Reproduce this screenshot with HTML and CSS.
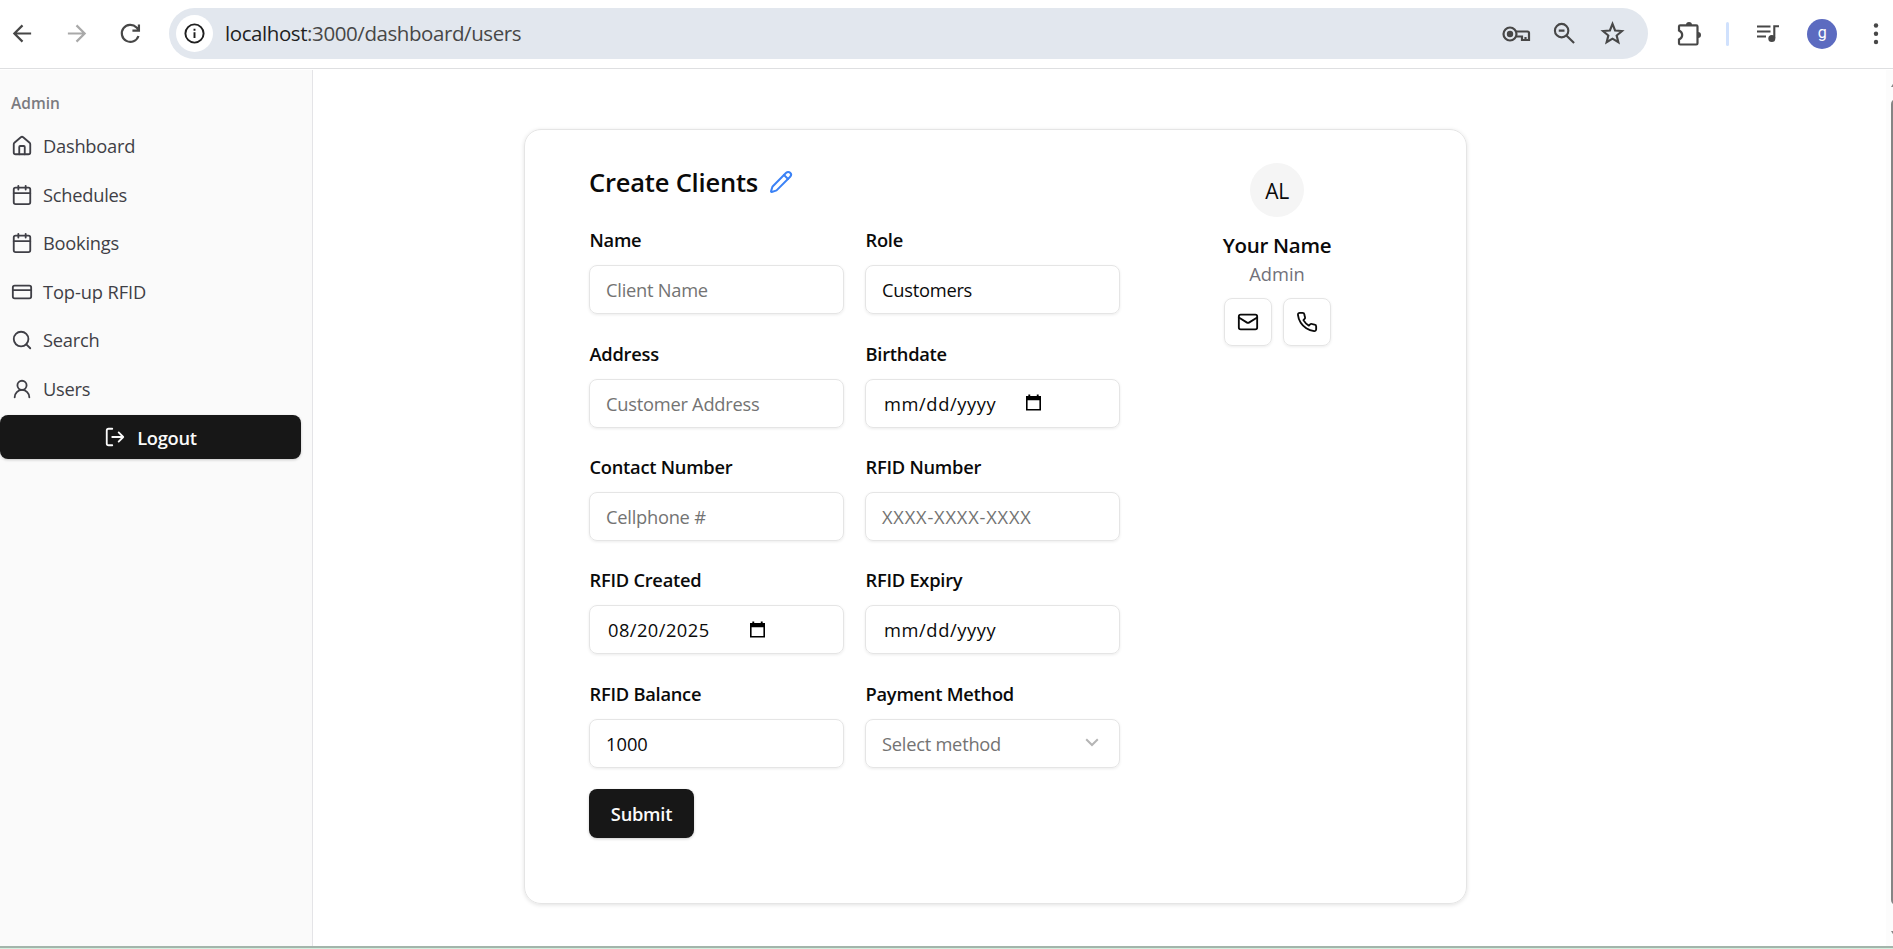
FILE: index.html
```html
<!DOCTYPE html>
<html lang="en">
<head>
<meta charset="utf-8">
<title>Create Clients</title>
<link rel="stylesheet" href="styles.css">
</head>
<body>
<header class="toolbar">
  <svg class="nav-icon back" viewBox="0 0 24 24"><path d="M21 12H4M12 3.500L3.500 12l8.500 8.500"/></svg>
  <svg class="nav-icon forward" viewBox="0 0 24 24"><path d="M3 12h17M12 3.500l8.500 8.500-8.500 8.500"/></svg>
  <svg class="nav-icon reload" viewBox="0 0 24 24"><path d="M20.300 14.600A8.900 8.900 0 1 1 18.300 5.700L20.500 8M20.800 2.500V9H14"/></svg>
  <div class="omnibox">
    <span class="info"><svg viewBox="0 0 24 24"><circle cx="12" cy="12" r="10.400"/><path d="M12 10.700v6.500M12 6.600v2.300"/></svg></span>
    <span class="url"><b>localhost</b>:3000/dashboard/users</span>
    <svg class="key" viewBox="0 0 30 20"><circle cx="9" cy="10" r="6.500"/><circle class="solid" cx="9" cy="10" r="3.200"/><path d="M15 7.500H26.500q1.500 0 1.500 1.500V16H21v-3.500H15.500M24.500 16v-3"/></svg>
    <svg class="magnify" viewBox="0 0 24 24"><circle cx="9" cy="9" r="7"/><path d="M14 14l8 8M6 9h6"/></svg>
    <svg class="star" viewBox="0 0 24 24"><path d="M12 3.500l2.300 5.800 6.100.5-4.700 4 1.500 6L12 16.600l-5.200 3.200 1.500-6-4.700-4 6.100-.5z"/></svg>
  </div>
  <svg class="puzzle" viewBox="0 0 26 26"><path d="M3 5.500Q3 4.300 4.200 4.300H20.300Q21.500 4.300 21.500 5.500V22.300Q21.500 23.500 20.300 23.500H4.200Q3 23.500 3 22.300V18.500Q6.200 17 6.200 14T3 9.500Z"/><path class="solid" d="M10 4a3 3 0 0 1 6 0zM22 11a3 3 0 0 1 0 6z"/></svg>
  <span class="divider"></span>
  <svg class="media" viewBox="0 0 24 20"><path d="M1 2.500h13.500M1 7.500h13.500M1 12.500h9M18.300 14V2.300H23"/><circle class="solid" cx="15.800" cy="14.500" r="3.500"/></svg>
  <span class="profile">g</span>
  <svg class="more" viewBox="0 0 6 24"><circle cx="3" cy="3.500" r="2.200"/><circle cx="3" cy="11.700" r="2.200"/><circle cx="3" cy="20" r="2.200"/></svg>
</header>
<div class="page">
  <aside class="sidebar">
    <div class="group">Admin</div>
    <nav class="menu">
      <a class="item"><svg class="lucide" viewBox="0 0 24 24"><path d="M15 21v-8a1 1 0 0 0-1-1h-4a1 1 0 0 0-1 1v8"/><path d="M3 10a2 2 0 0 1 .709-1.528l7-5.999a2 2 0 0 1 2.582 0l7 5.999A2 2 0 0 1 21 10v9a2 2 0 0 1-2 2H5a2 2 0 0 1-2-2z"/></svg><span>Dashboard</span></a>
      <a class="item"><svg class="lucide" viewBox="0 0 24 24"><path d="M8 2v4M16 2v4M3 10h18"/><rect width="18" height="18" x="3" y="4" rx="2"/></svg><span>Schedules</span></a>
      <a class="item"><svg class="lucide" viewBox="0 0 24 24"><path d="M8 2v4M16 2v4M3 10h18"/><rect width="18" height="18" x="3" y="4" rx="2"/></svg><span>Bookings</span></a>
      <a class="item"><svg class="lucide" viewBox="0 0 24 24"><rect width="20" height="14" x="2" y="5" rx="2"/><path d="M2 10h20"/></svg><span class="topup">Top-up RFID</span></a>
      <a class="item"><svg class="lucide" viewBox="0 0 24 24"><circle cx="11" cy="11" r="8"/><path d="m21 21-4.300-4.300"/></svg><span>Search</span></a>
      <a class="item"><svg class="lucide" viewBox="0 0 24 24"><circle cx="12" cy="8" r="5"/><path d="M20 21a8 8 0 0 0-16 0"/></svg><span>Users</span></a>
    </nav>
    <button class="logout"><svg class="lucide" viewBox="0 0 24 24"><path d="m16 17 5-5-5-5M21 12H9M9 21H5a2 2 0 0 1-2-2V5a2 2 0 0 1 2-2h4"/></svg><span>Logout</span></button>
  </aside>
  <main class="content">
    <section class="card">
      <div class="form">
        <h1 class="title"><span>Create Clients</span><svg class="lucide" viewBox="0 0 24 24"><path d="M21.174 6.812a1 1 0 0 0-3.986-3.987L3.842 16.174a2 2 0 0 0-.5.830l-1.321 4.352a.5.5 0 0 0 .623.622l4.353-1.320a2 2 0 0 0 .830-.497z"/><path d="m15 5 4 4"/></svg></h1>
        <div class="fields">
          <div class="field"><label>Name</label><div class="input hint">Client Name</div></div>
          <div class="field"><label>Role</label><div class="input">Customers</div></div>
          <div class="field"><label>Address</label><div class="input hint">Customer Address</div></div>
          <div class="field"><label>Birthdate</label><div class="input date"><span class="mask">mm/dd/yyyy</span><svg viewBox="0 0 16 17"><path d="M2.500 0h2v1.500h7V0h2v1.500H16V17H0V1.500h2.500zM1.700 6v9.300h12.600V6z"/></svg></div></div>
          <div class="field"><label>Contact Number</label><div class="input hint">Cellphone #</div></div>
          <div class="field"><label>RFID Number</label><div class="input hint rfid">XXXX-XXXX-XXXX</div></div>
          <div class="field"><label>RFID Created</label><div class="input date"><span class="digits">08/20/2025</span><svg viewBox="0 0 16 17"><path d="M2.500 0h2v1.500h7V0h2v1.500H16V17H0V1.500h2.500zM1.700 6v9.300h12.600V6z"/></svg></div></div>
          <div class="field"><label>RFID Expiry</label><div class="input date"><span class="mask">mm/dd/yyyy</span></div></div>
          <div class="field"><label>RFID Balance</label><div class="input amount">1000</div></div>
          <div class="field"><label>Payment Method</label><div class="input hint select"><span>Select method</span><svg viewBox="0 0 14 9"><path d="M1.200 1.200 7 7l5.800-5.800"/></svg></div></div>
        </div>
        <button class="submit">Submit</button>
      </div>
      <div class="person">
        <div class="avatar">AL</div>
        <div class="name">Your Name</div>
        <div class="role">Admin</div>
        <div class="actions">
          <span class="action"><svg class="lucide" viewBox="0 0 24 24"><rect width="20" height="16" x="2" y="4" rx="2"/><path d="m22 7-8.970 5.700a1.940 1.940 0 0 1-2.060 0L2 7"/></svg></span>
          <span class="action"><svg class="lucide" viewBox="0 0 24 24"><path d="M22 16.920v3a2 2 0 0 1-2.180 2 19.790 19.790 0 0 1-8.630-3.070 19.500 19.500 0 0 1-6-6 19.790 19.790 0 0 1-3.070-8.670A2 2 0 0 1 4.110 2h3a2 2 0 0 1 2 1.720 12.840 12.840 0 0 0 .7 2.810 2 2 0 0 1-.45 2.110L8.090 9.910a16 16 0 0 0 6 6l1.270-1.270a2 2 0 0 1 2.110-.45 12.840 12.840 0 0 0 2.810.7A2 2 0 0 1 22 16.920z"/></svg></span>
        </div>
      </div>
    </section>
  </main>
  <div class="scrollbar"><span class="arrow up"></span><span class="thumb"></span><span class="arrow down"></span></div>
</div>
<footer class="edge"></footer>
</body>
</html>
```
FILE: styles.css
```css
* { box-sizing: border-box; }
body {
  margin: 0;
  width: 1893px;
  height: 949px;
  overflow: hidden;
  display: flex;
  flex-direction: column;
  background: #fff;
  color: #0a0a0a;
  font: 400 18.3px/20px "Open Sans", "Noto Sans", sans-serif;
  letter-spacing: -0.25px;
}
svg { display: block; flex: none; fill: none; stroke: currentColor; overflow: visible; }
button { font: inherit; letter-spacing: inherit; border: 0; margin: 0; padding: 0; }
.lucide { stroke-width: 2; stroke-linecap: round; stroke-linejoin: round; }

.toolbar {
  height: 70px;
  flex: none;
  padding: 8px 0 11px 11px;
  display: flex;
  align-items: center;
  color: #474747;
  background: linear-gradient(#fff, #fff) 0 0 / 100% 68px no-repeat, linear-gradient(#dedfe1, #dedfe1) 0 68px / 100% 1px no-repeat;
}
.nav-icon { width: 23px; height: 23px; stroke-width: 2.300; }
.forward { margin-left: 31px; color: #a9a9a9; }
.reload { margin-left: 31px; }
.omnibox {
  width: 1479px;
  height: 51px;
  margin-left: 27px;
  padding: 0 22px 0 7px;
  border-radius: 26px;
  background: #e2e7ee;
  display: flex;
  align-items: center;
}
.info { width: 37px; height: 37px; border-radius: 50%; background: #fff; color: #1f1f1f; display: grid; place-items: center; }
.info svg { width: 21px; height: 21px; stroke-width: 2.200; }
.url { margin: 0 auto 0 12px; padding-bottom: 2px; font-size: 20.500px; letter-spacing: -0.42px; line-height: 30px; }
.url b { font-weight: 400; color: #1f1f1f; }
.solid { fill: currentColor; stroke: none; }
.key { width: 30px; height: 20px; stroke-width: 2.200; }
.magnify { width: 23px; height: 23px; margin-left: 22px; stroke-width: 2.200; }
.star { width: 27px; height: 27px; margin-left: 23px; stroke-width: 1.900; }
.puzzle { width: 26px; height: 26px; margin-left: 28px; stroke-width: 2.200; }
.divider { width: 3px; height: 24px; margin-left: 24px; border-radius: 2px; background: #d0e1fd; }
.media { width: 24px; height: 20px; margin-left: 27px; stroke-width: 2.100; }
.profile { width: 30px; height: 30px; margin-left: 27px; border-radius: 50%; background: #5c6bc0; color: #fff; font: 16px/28px Roboto, sans-serif; text-align: center; }
.more { width: 6px; height: 24px; margin-left: 36px; fill: currentColor; stroke: none; }

.page { flex: 1; min-height: 0; display: flex; }
.sidebar { width: 313px; border-right: 1px solid #e4e4e7; background: #fafafa; padding-top: 23px; }
.group { padding-left: 11px; font-size: 15.500px; font-weight: 600; letter-spacing: 0; color: #7b7b80; }
.menu { padding-top: 9px; }
.item { height: 48.500px; padding-left: 10.500px; display: flex; align-items: center; gap: 10.500px; color: #3f3f46; }
.item svg { width: 22px; height: 22px; }
.topup { letter-spacing: -0.1px; }
.logout { width: 301px; height: 44px; margin-top: 2px; border-radius: 8px; background: #171717; color: #fafafa; display: flex; align-items: center; justify-content: center; gap: 11px; font-weight: 600; box-shadow: 0 1px 3px #0003; }
.logout svg { width: 22px; height: 22px; }
.logout span { padding-top: 2px; }

.content { flex: 1; padding: 59px 0 0 211px; }
.card { width: 943px; height: 775px; border: 1px solid #e5e5e5; border-radius: 17px; box-shadow: 0 1px 4px #0000001f; padding: 33px 0 0 64px; display: flex; }
.title { margin: 0; height: 38px; display: flex; align-items: center; gap: 11px; font-size: 25.500px; font-weight: 600; line-height: 36px; letter-spacing: -0.2px; }
.title svg { width: 24px; height: 24px; color: #3b82f6; }
.fields { margin-top: 29.400px; display: grid; grid-template-columns: 255px 255px; gap: 29.330px 21px; }
.field label { display: block; height: 20px; padding-left: 0.500px; font-weight: 600; }
.input { height: 49px; margin-top: 15px; padding: 1px 16px 0; border: 1px solid #e5e5e5; border-radius: 8px; box-shadow: 0 1px 3px #00000014; display: flex; align-items: center; }
.hint { color: #737373; }
.rfid { letter-spacing: 0.800px; }
.amount { letter-spacing: 0; }
.date { padding-left: 18px; }
.date svg { width: 15px; height: 17px; fill: #000; fill-rule: evenodd; stroke: none; margin-bottom: 2px; }
.mask { width: 142px; letter-spacing: 0.600px; }
.digits { width: 142px; letter-spacing: 0.450px; }
.select { justify-content: space-between; padding-right: 20px; }
.select svg { width: 14px; height: 9px; stroke: #b5b5b5; stroke-width: 2; margin-bottom: 3px; }
.submit { width: 105px; height: 49px; margin-top: 21px; padding-top: 1px; border-radius: 8px; background: #171717; color: #fafafa; font-weight: 600; box-shadow: 0 1px 3px #0003; }
.person { width: 110px; margin-left: 102px; display: flex; flex-direction: column; align-items: center; }
.avatar { width: 54px; height: 54px; border-radius: 50%; background: #f5f5f5; font-size: 21px; line-height: 56px; text-align: center; }
.name { margin-top: 13px; font-size: 20.500px; font-weight: 600; line-height: 30px; letter-spacing: -0.3px; white-space: nowrap; }
.role { margin-top: 4px; line-height: 20px; letter-spacing: 0; color: #71717a; }
.actions { margin-top: 14px; display: flex; gap: 11px; }
.action { width: 48px; height: 48px; border: 1px solid #e5e5e5; border-radius: 8px; box-shadow: 0 1px 3px #00000014; display: grid; place-items: center; }
.action svg { width: 22px; height: 22px; }

.scrollbar { width: 7px; background: #fcfcfc; overflow: hidden; display: flex; flex-direction: column; padding-left: 5px; }
.arrow { width: 12px; height: 6px; flex: none; background: #858585; }
.up { margin-top: 11px; clip-path: polygon(30% 0, 70% 0, 100% 100%, 0 100%); }
.thumb { width: 10px; height: 806px; margin: 12px 0 26px; flex: none; border-radius: 5px; background: #858585; }
.down { clip-path: polygon(0 0, 100% 0, 70% 100%, 30% 100%); }
.edge { height: 3px; flex: none; background: linear-gradient(#a3b5ab 2px, #d5efdf 2px); }
```
